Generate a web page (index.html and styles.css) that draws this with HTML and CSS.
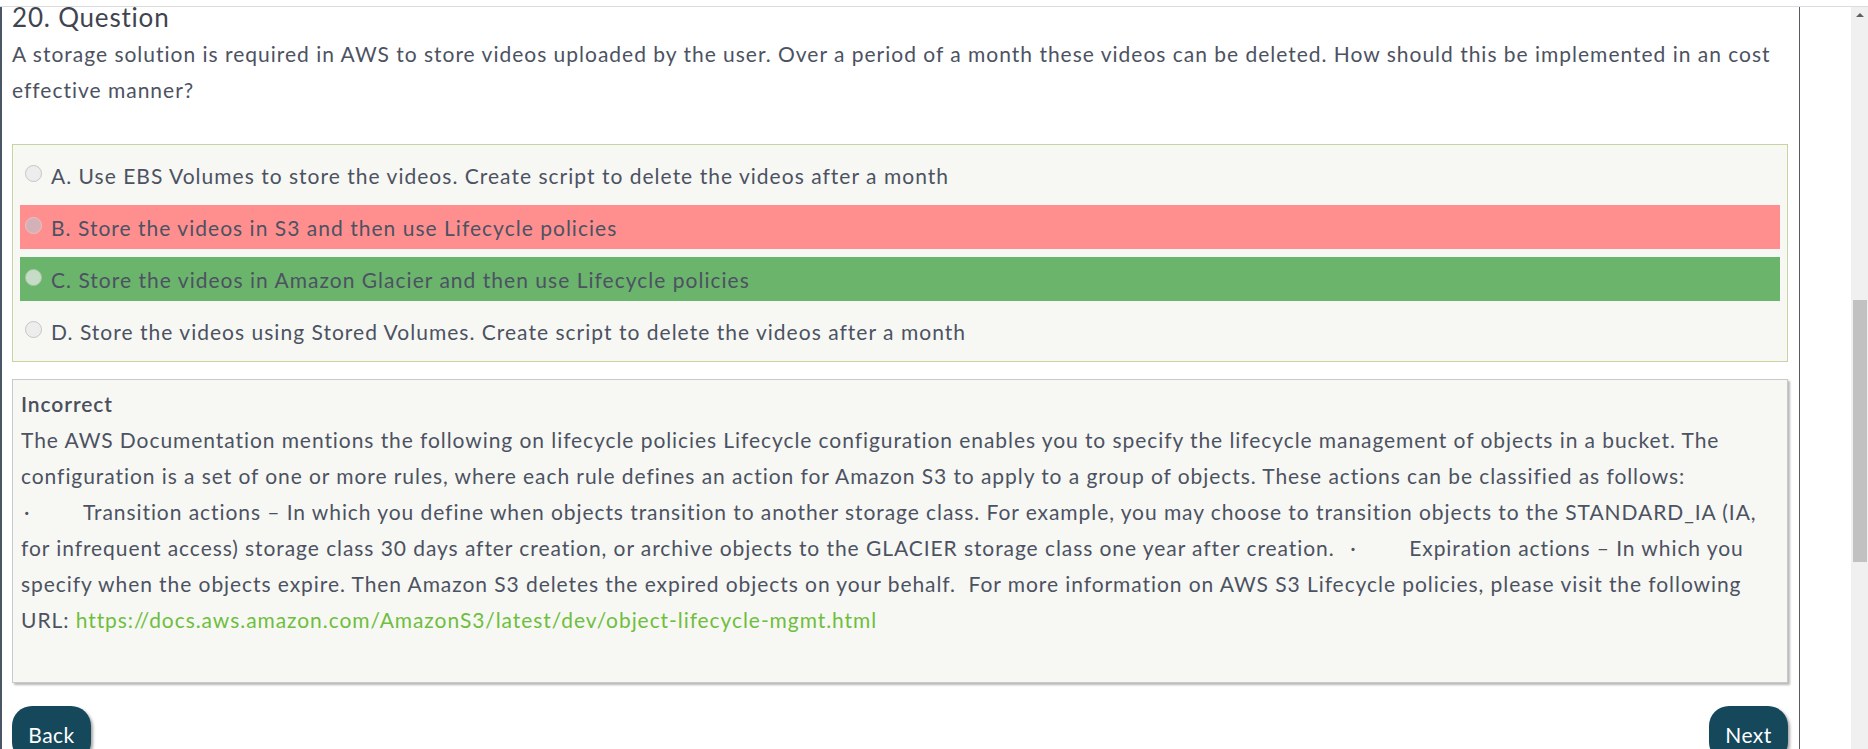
FILE: index.html
```html
<!DOCTYPE html>
<html lang="en">
<head>
<meta charset="utf-8">
<title>20. Question</title>
<link rel="stylesheet" href="styles.css">
</head>
<body>
<div class="window">
  <div class="chrome"></div>
  <div class="viewport">
    <main class="page">
      <h2 class="q-title">20. Question</h2>
      <p class="q-text">A storage solution is required in AWS to store videos uploaded by the user. Over a period of a month these videos can be deleted. How should this be implemented in an cost<br>effective manner?</p>

      <div class="options">
        <label class="option"><span class="radio"></span><span class="opt-text">A. Use EBS Volumes to store the videos. Create script to delete the videos after a month</span></label>
        <label class="option wrong"><span class="radio"></span><span class="opt-text">B. Store the videos in S3 and then use Lifecycle policies</span></label>
        <label class="option right"><span class="radio"></span><span class="opt-text">C. Store the videos in Amazon Glacier and then use Lifecycle policies</span></label>
        <label class="option"><span class="radio"></span><span class="opt-text">D. Store the videos using Stored Volumes. Create script to delete the videos after a month</span></label>
      </div>

      <div class="explain">
        <div class="verdict">Incorrect</div>
        <p class="explain-text">The AWS Documentation mentions the following on lifecycle policies Lifecycle configuration enables you to specify the lifecycle management of objects in a bucket. The<br>configuration is a set of one or more rules, where each rule defines an action for Amazon S3 to apply to a group of objects. These actions can be classified as follows:<br><span class="bullet">·</span>Transition actions – In which you define when objects transition to another storage class. For example, you may choose to transition objects to the STANDARD_IA (IA,<br>for infrequent access) storage class 30 days after creation, or archive objects to the GLACIER storage class one year after creation. &nbsp;<span class="bullet">·</span>Expiration actions – In which you<br>specify when the objects expire. Then Amazon S3 deletes the expired objects on your behalf. &nbsp;For more information on AWS S3 Lifecycle policies, please visit the following<br>URL: <a class="link" href="#">https://docs.aws.amazon.com/AmazonS3/latest/dev/object-lifecycle-mgmt.html</a></p>
      </div>

      <div class="nav">
        <button class="btn" type="button">Back</button>
        <button class="btn" type="button">Next</button>
      </div>
    </main>
    <div class="gutter"></div>
    <div class="scrollbar">
      <span class="arrow"></span>
      <span class="thumb"></span>
    </div>
  </div>
</div>
</body>
</html>
```

FILE: styles.css
```css
* { box-sizing: border-box; }

html, body {
  margin: 0;
  padding: 0;
  background: #ffffff;
  overflow: hidden;
}

body {
  font-family: "Lato", "Open Sans", sans-serif;
  color: #4c5262;
}

.window {
  width: 1868px;
  height: 749px;
  display: flex;
  flex-direction: column;
  overflow: hidden;
}

.chrome {
  height: 7px;
  flex: none;
  border-bottom: 1px solid #dcdcdc;
  background: #ffffff;
}

.viewport {
  flex: 1;
  display: flex;
  min-height: 0;
}

.page {
  width: 1800px;
  flex: none;
  border-left: 2px solid #4a5566;
  border-right: 1px solid #555b66;
  padding: 0 11px 0 10px;
}

.gutter { flex: 1; }

.scrollbar {
  width: 17px;
  flex: none;
  background: #f0f0f0;
  position: relative;
}

.arrow {
  position: absolute;
  left: 5px;
  top: 6px;
  width: 0;
  height: 0;
  border-left: 4px solid transparent;
  border-right: 4px solid transparent;
  border-bottom: 4px solid #606060;
}

.thumb {
  position: absolute;
  left: 2px;
  right: 1px;
  top: 293px;
  height: 262px;
  background: #c1c1c1;
}

.q-title {
  margin: 0 0 9px;
  font-size: 26px;
  line-height: 20px;
  font-weight: 400;
  letter-spacing: 0.8px;
  color: #3f4450;
}

.q-text {
  margin: 0;
  font-size: 21px;
  line-height: 36px;
  letter-spacing: 0.99px;
  white-space: nowrap;
}

.options {
  margin-top: 36px;
  border: 1px solid #c5d5a2;
  background: #f7f8f4;
  padding: 8px 7px;
  display: flex;
  flex-direction: column;
  gap: 8px;
}

.option {
  height: 44px;
  display: flex;
  align-items: center;
  padding-left: 5px;
  font-size: 21px;
  letter-spacing: 1.02px;
  white-space: nowrap;
}

.option.wrong { background: #ff8f8f; }
.option.right { background: #6bb46b; }

.radio {
  width: 17px;
  height: 17px;
  border-radius: 50%;
  border: 1px solid #c6c6c6;
  background: #ededed;
  margin: -4px 9px 0 0;
  flex: none;
}

.wrong .radio { background: #d3b1b6; border-color: #e6c3c6; }
.right .radio { background: #c6dcc6; border-color: #a6c8a6; }

.explain {
  margin-top: 17px;
  border: 1px solid #c9c9c9;
  background: #f7f8f4;
  box-shadow: 2px 2px 2px rgba(0, 0, 0, 0.28);
  padding: 6px 8px 44px;
  font-size: 21px;
  line-height: 36px;
  letter-spacing: 0.93px;
}

.verdict {
  font-weight: 600;
  color: #4a4f5c;
}

.explain-text {
  margin: 0;
  white-space: nowrap;
}

.bullet {
  display: inline-block;
  width: 62px;
  padding-left: 3px;
}

.link {
  color: #6fbe3e;
  text-decoration: none;
}

.nav {
  margin-top: 23px;
  display: flex;
  justify-content: space-between;
}

.btn {
  width: 79px;
  height: 56px;
  border: none;
  border-radius: 20px;
  background: #15485b;
  color: #ffffff;
  font-family: "Lato", "Open Sans", sans-serif;
  font-size: 21px;
  letter-spacing: 0.5px;
  padding: 0;
  box-shadow: 2px 2px 3px rgba(0, 0, 0, 0.35);
}
```
